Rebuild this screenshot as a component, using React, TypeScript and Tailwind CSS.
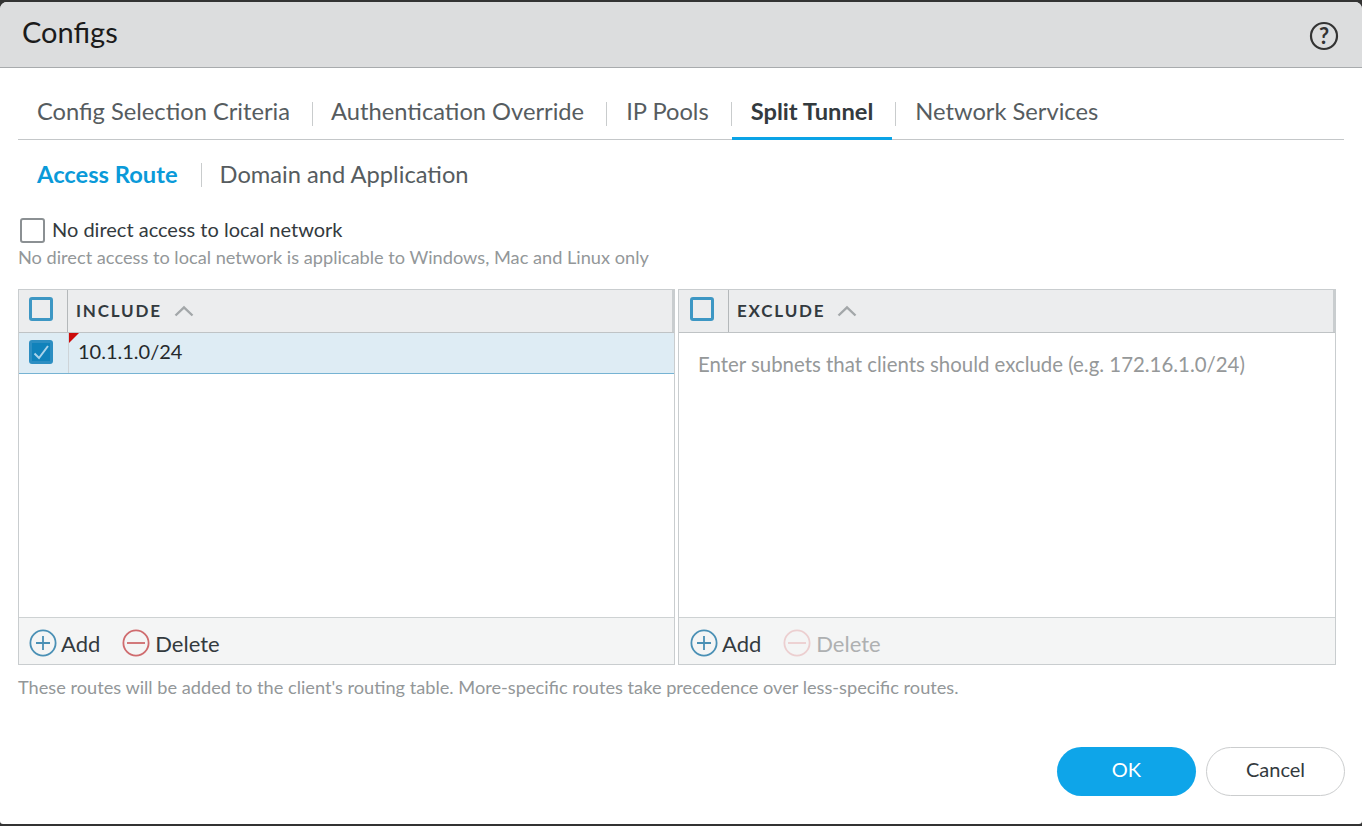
const tabs = ["Config Selection Criteria", "Authentication Override", "IP Pools", "Split Tunnel", "Network Services"];

function Box({ checked }: { checked?: boolean }) {
  return (
    <span className={`flex h-[24px] w-[24px] items-center justify-center rounded-[3px] border-[3px] ${checked ? "border-[#2c8ec2] bg-[#1082bb]" : "border-[#3d97c4] bg-transparent"}`}>
      {checked ? (
        <svg width="18" height="18" viewBox="0 0 18 18" fill="none">
          <path d="M2.5 10.5 L7 15 L16 3" stroke="#a9d3ea" strokeWidth="2" />
        </svg>
      ) : null}
    </span>
  );
}

function Chevron() {
  return (
    <svg width="20" height="12" viewBox="0 0 20 12" fill="none">
      <path d="M1.5 10.5 L10 2.5 L18.5 10.5" stroke="#a3a7a9" strokeWidth="2.4" />
    </svg>
  );
}

function RoundIcon({ type, faded }: { type: "add" | "delete"; faded?: boolean }) {
  const color = type === "add" ? "#4a90b5" : faded ? "#eccfd0" : "#cf6b6e";
  return (
    <svg width="28" height="28" viewBox="0 0 28 28" fill="none">
      <circle cx="14" cy="14" r="12.6" stroke={color} strokeWidth="1.8" />
      {type === "add" ? (
        <path d="M7 14 H21 M14 7 V21" stroke={color} strokeWidth="1.8" />
      ) : (
        <path d="M5 14 H23" stroke={color} strokeWidth="1.8" />
      )}
    </svg>
  );
}

function Footer({ faded, inset }: { faded?: boolean; inset: string }) {
  return (
    <div className={`flex h-[47px] items-center border-t border-[#ced2d3] bg-[#f4f5f5] pt-[4px] text-[22px] ${inset}`}>
      <RoundIcon type="add" />
      <span className="ml-[4px] text-[#333a3e]">Add</span>
      <span className="ml-[22px] flex items-center">
        <RoundIcon type="delete" faded={faded} />
        <span className={`ml-[5px] ${faded ? "text-[#aeb0b1]" : "text-[#333a3e]"}`}>Delete</span>
      </span>
    </div>
  );
}

function Head({ label, cell }: { label: string; cell: string }) {
  return (
    <div className="flex h-[43px] border-b border-[#bfc3c5] bg-[#ecedee]">
      <div className={`flex items-center border-r border-[#b4b8ba] pb-[5px] ${cell}`}>
        <Box />
      </div>
      <div className="flex flex-1 items-center gap-[12px] border-r-[2px] border-[#c9cdcf] pl-[8px]">
        <span className="text-[17px] font-bold tracking-[1.8px] text-[#333a3e]">{label}</span>
        <Chevron />
      </div>
    </div>
  );
}

export default function App() {
  return (
    <div className="h-[826px] w-[1362px] overflow-hidden bg-[#333333] pt-[2px] font-['Lato','Open_Sans',sans-serif]">
      <div className="flex h-[822px] flex-col rounded-t-[7px] rounded-b-[3px] bg-white">
        <header className="flex h-[66px] items-center justify-between rounded-t-[7px] border-b border-[#a8abad] bg-[#dcddde] pl-[22px] pr-[23px]">
          <h1 className="mb-[6px] text-[29px] text-[#1b1b1b]">Configs</h1>
          <svg className="mt-[2px]" width="30" height="30" viewBox="0 0 30 30" fill="none">
            <circle cx="15" cy="15" r="13" stroke="#333" strokeWidth="2.2" />
            <text x="15" y="22.5" textAnchor="middle" fontSize="22" fontWeight="700" fill="#333" fontFamily="Lato">?</text>
          </svg>
        </header>

        <nav className="mx-[18px] mt-[22px] flex h-[50px] border-b border-[#c4c7c9]">
          {tabs.map((t, i) => (
            <div key={t} className="flex items-start">
              <div className={`h-[50px] pt-[4px] text-[23.7px] ${i === 1 ? "pl-[18px] pr-[19px]" : "px-[19px]"} ${t === "Split Tunnel" ? "border-b-[3px] border-[#0aa3e6] font-bold text-[#333a3e]" : "text-[#565c60]"}`}>{t}</div>
              {i < tabs.length - 1 ? <span className="ml-[3px] mt-[12px] h-[24px] w-px bg-[#c9cccd]" /> : null}
            </div>
          ))}
        </nav>

        <div className="ml-[18px] mt-[17px] flex h-[36px] items-center text-[23.7px]">
          <span className="pl-[19px] pr-[23px] font-bold text-[#0a9ad9]">Access Route</span>
          <span className="h-[24px] w-px bg-[#c9cccd]" />
          <span className="pl-[18px] text-[#565c60]">Domain and Application</span>
        </div>

        <label className="ml-[20px] mt-[22px] flex h-[31px] items-center">
          <span className="h-[25px] w-[25px] rounded-[3px] border-2 border-[#8b9093] bg-white" />
          <span className="mb-[4px] ml-[7px] text-[20px] text-[#333a3e]">No direct access to local network</span>
        </label>
        <p className="ml-[18px] text-[18.2px] leading-[22px] text-[#939799]">No direct access to local network is applicable to Windows, Mac and Linux only</p>

        <div className="ml-[18px] mt-[21px] flex h-[376px] gap-[3px]">
          <section className="flex w-[657px] flex-col border border-[#c9cdcf]">
            <Head label="INCLUDE" cell="w-[49px] pl-[10px]" />
            <div className="relative flex h-[41px] items-center border-b border-[#76b3d3] bg-[#deecf4]">
              <div className="flex h-full w-[50px] items-center border-r border-[#ced4d8] pb-[2px] pl-[10px]">
                <Box checked />
              </div>
              <span className="absolute left-[50px] top-0 h-0 w-0 border-r-[10px] border-t-[10px] border-r-transparent border-t-[#cc0a0a]" />
              <span className="pb-[4px] pl-[9px] text-[20px] text-[#25292c]">10.1.1.0/24</span>
            </div>
            <div className="flex-1" />
            <Footer inset="pl-[10px]" />
          </section>
          <section className="flex w-[658px] flex-col border border-[#c9cdcf]">
            <Head label="EXCLUDE" cell="w-[50px] pl-[11px]" />
            <div className="flex-1 pl-[19px] pt-[16px] text-[20.4px] text-[#959899]">Enter subnets that clients should exclude (e.g. 172.16.1.0/24)</div>
            <Footer faded inset="pl-[11px]" />
          </section>
        </div>

        <p className="ml-[18px] mt-[11px] text-[18.2px] leading-[22px] text-[#939799]">These routes will be added to the client's routing table. More-specific routes take precedence over less-specific routes.</p>

        <div className="mr-[17px] mt-[49px] flex justify-end gap-[10px] text-[20px]">
          <button className="h-[49px] w-[139px] rounded-full bg-[#0ea5e9] pb-[5px] text-white">OK</button>
          <button className="h-[49px] w-[139px] rounded-full border border-[#cbcdce] bg-white pb-[5px] text-[#333a3e]">Cancel</button>
        </div>
      </div>
    </div>
  );
}
